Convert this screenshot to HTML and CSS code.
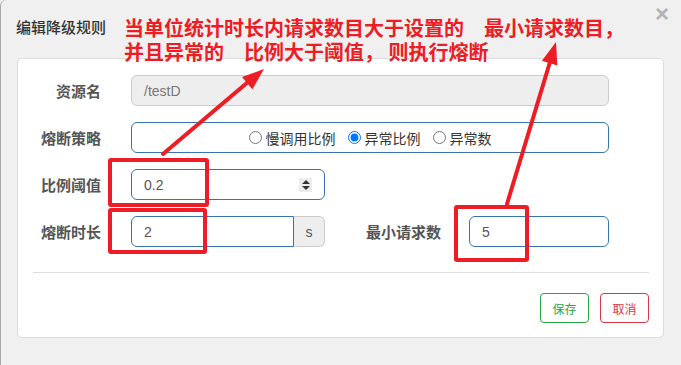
FILE: index.html
```html
<!DOCTYPE html>
<html lang="zh-CN">
<head>
<meta charset="utf-8">
<title>编辑降级规则</title>
<link rel="stylesheet" href="styles.css">
</head>
<body>
<div class="modal">
  <div class="modal-header">
    <span class="modal-title">编辑降级规则</span>
    <span class="close">×</span>
  </div>
  <div class="card">
    <div class="form">
      <div class="row">
        <label class="label">资源名</label>
        <div class="input wide disabled">/testD</div>
      </div>
      <div class="row">
        <label class="label">熔断策略</label>
        <div class="input wide radios">
          <label class="radio"><input type="radio" name="grade">慢调用比例</label>
          <label class="radio"><input type="radio" name="grade" checked>异常比例</label>
          <label class="radio"><input type="radio" name="grade">异常数</label>
        </div>
      </div>
      <div class="row">
        <label class="label">比例阈值</label>
        <div class="input number">
          <span>0.2</span>
          <span class="spin"><i class="up"></i><i class="down"></i></span>
        </div>
      </div>
      <div class="row">
        <label class="label">熔断时长</label>
        <div class="group">
          <div class="input grouped">2</div>
          <div class="addon">s</div>
        </div>
        <label class="label label-right">最小请求数</label>
        <div class="input small">5</div>
      </div>
    </div>
    <div class="divider"></div>
    <div class="footer">
      <button class="btn btn-save">保存</button>
      <button class="btn btn-cancel">取消</button>
    </div>
  </div>

  <div class="note">
    <div class="note-line">当单位统计时长内请求数目大于设置的　最小请求数目，</div>
    <div class="note-line">并且异常的　比例大于阈值，&nbsp;则执行熔断</div>
  </div>

  <svg class="marks" width="681" height="365" viewBox="0 0 681 365">
    <g fill="none" stroke="#ee1c25" stroke-width="4">
      <rect x="110" y="160" width="97" height="45" rx="1"/>
      <rect x="110" y="210" width="95" height="42" rx="1"/>
      <rect x="456" y="207" width="71" height="53" rx="1"/>
      <line x1="163" y1="154" x2="248" y2="82" stroke-linecap="round"/>
      <line x1="507" y1="204" x2="550" y2="62" stroke-linecap="round"/>
    </g>
    <g fill="#ee1c25">
      <polygon points="264,69 252.4,89.3 242,77.1"/>
      <polygon points="556,42 557.3,65.4 541.9,60.8"/>
    </g>
  </svg>
</div>
</body>
</html>
```
FILE: styles.css
```css
* { box-sizing: border-box; }
html, body {
  margin: 0;
  padding: 0;
  width: 681px;
  height: 365px;
  overflow: hidden;
  background: #efefef;
}
body {
  font-family: "Noto Sans CJK SC", "Liberation Sans", sans-serif;
  color: #333;
}
.modal {
  position: relative;
  width: 681px;
  height: 365px;
  background: #f0f0f0;
  border-left: 1px solid #a8a8a8;
  border-top-left-radius: 6px;
}
.modal-header {
  height: 58px;
  display: flex;
  align-items: flex-start;
  justify-content: space-between;
  padding: 0 12px 0 15px;
}
.modal-title {
  margin-top: 16px;
  font-size: 15px;
  line-height: 22px;
  font-weight: 500;
  color: #333;
}
.close {
  margin-top: 2px;
  font-family: "Liberation Sans", sans-serif;
  font-size: 24px;
  line-height: 24px;
  font-weight: bold;
  color: #b3b3b3;
}
.card {
  margin-left: 16px;
  width: 647px;
  height: 280px;
  background: #fff;
  border: 1px solid #dcdcdc;
  border-radius: 5px;
  padding: 16px 0 0 0;
}
.form {
  display: flex;
  flex-direction: column;
  gap: 16px;
}
.row {
  display: flex;
  align-items: center;
  height: 31px;
}
.label {
  width: 83px;
  margin-right: 30px;
  text-align: right;
  font-size: 15px;
  font-weight: bold;
  color: #555;
  flex: none;
}
.label-right {
  width: 116px;
  margin-right: 28px;
}
.input {
  height: 31px;
  border: 1px solid #3874b1;
  border-radius: 6px;
  font-family: "Liberation Sans", "Noto Sans CJK SC", sans-serif;
  font-size: 14px;
  color: #555;
  display: flex;
  align-items: center;
  padding: 0 12px;
  flex: none;
}
.wide { width: 478px; }
.disabled {
  background: #eee;
  border-color: #ccc;
  color: #777;
}
.radios {
  justify-content: center;
  gap: 12px;
  padding: 0;
  color: #333;
  font-family: "Noto Sans CJK SC", sans-serif;
  font-size: 14px;
}
.radio {
  display: flex;
  align-items: center;
}
.radio input {
  width: 13px;
  height: 13px;
  margin: 0 4px 0 0;
}
.number {
  width: 194px;
  justify-content: space-between;
  padding-right: 12px;
}
.spin {
  width: 13px;
  height: 14px;
  background: #ececec;
  display: flex;
  flex-direction: column;
  align-items: center;
  justify-content: center;
  gap: 2px;
}
.spin i {
  display: block;
  width: 0;
  height: 0;
  border-left: 4px solid transparent;
  border-right: 4px solid transparent;
}
.spin .up { border-bottom: 4px solid #333; }
.spin .down { border-top: 4px solid #333; }
.group {
  display: flex;
  width: 194px;
  flex: none;
}
.grouped {
  width: 163px;
  border-radius: 6px 0 0 6px;
}
.addon {
  width: 31px;
  height: 31px;
  background: #eee;
  border: 1px solid #ccc;
  border-left: none;
  border-radius: 0 6px 6px 0;
  display: flex;
  align-items: center;
  justify-content: center;
  font-family: "Liberation Sans", sans-serif;
  font-size: 14px;
  color: #555;
}
.small { width: 140px; }
.divider {
  margin: 25px 14px 0 15px;
  height: 1px;
  background: #dedede;
}
.footer {
  display: flex;
  justify-content: flex-end;
  gap: 11px;
  padding: 20px 14px 0 0;
}
.btn {
  width: 49px;
  height: 30px;
  background: #fff;
  border-radius: 4px;
  font-family: "Noto Sans CJK SC", sans-serif;
  font-size: 12px;
  padding: 0;
}
.btn-save { border: 1px solid #28a745; color: #28a745; }
.btn-cancel { border: 1px solid #dc3545; color: #dc3545; }
.note {
  position: absolute;
  left: 123px;
  top: 16px;
  font-size: 20px;
  font-weight: bold;
  color: #ee1c25;
  white-space: nowrap;
}
.note-line {
  height: 24px;
  line-height: 24px;
}
.marks {
  position: absolute;
  left: -1px;
  top: 0;
  pointer-events: none;
}
```
